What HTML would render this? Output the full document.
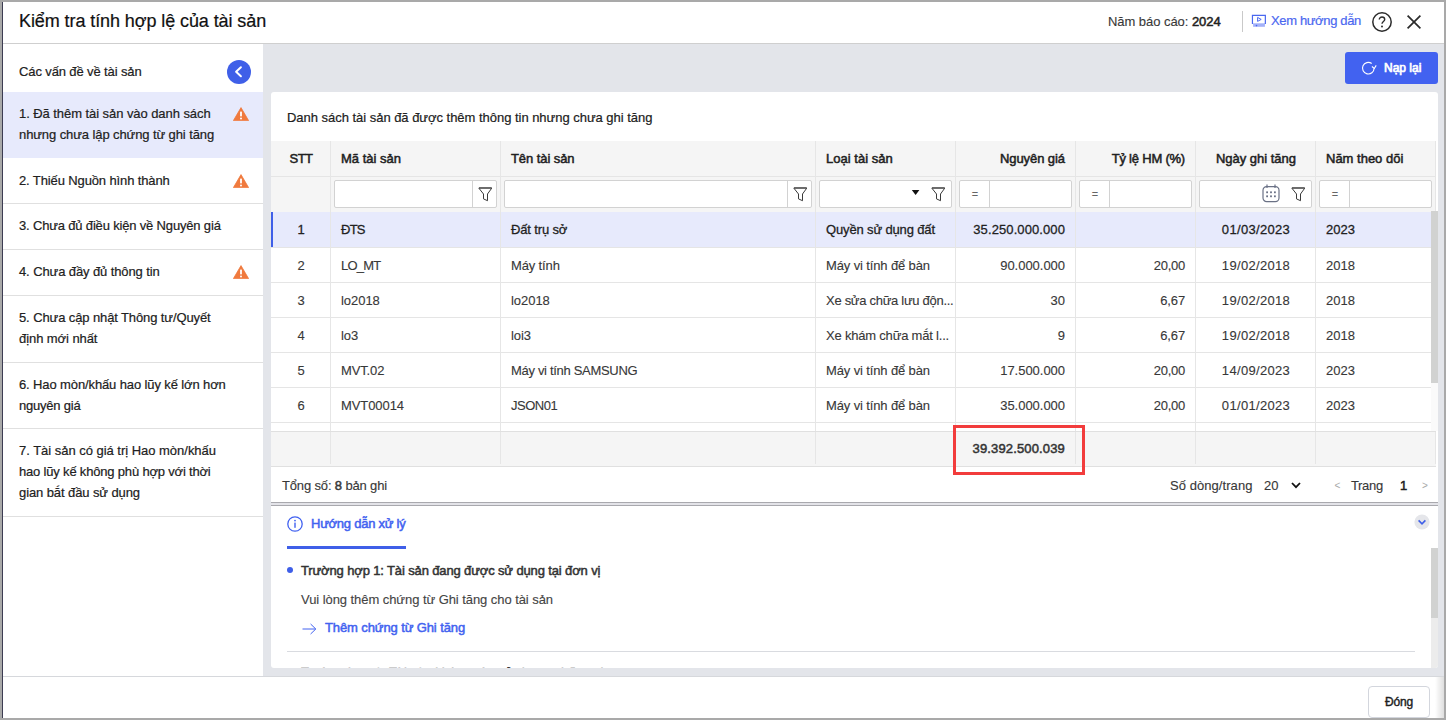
<!DOCTYPE html>
<html lang="vi">
<head>
<meta charset="utf-8">
<title>Kiểm tra tính hợp lệ của tài sản</title>
<style>
*{box-sizing:border-box;margin:0;padding:0}
html,body{width:1446px;height:720px;overflow:hidden}
body{background:#a9a9a9;font-family:"Liberation Sans",sans-serif;font-size:13px;color:#212121;position:relative}
.abs{position:absolute}
.t{position:absolute;white-space:nowrap;line-height:16px;height:16px;-webkit-text-stroke:0.2px currentColor}
#edge{left:2px;top:2px;width:1px;height:716px;background:#3c3c52}
#dlg{left:3px;top:2px;width:1441px;height:716px;background:#fff;overflow:hidden}
/* coordinates inside #dlg are page coords minus (3,2) -> use wrapper shift */
#pg{left:-3px;top:-2px;width:1446px;height:720px}
#hdrline{left:3px;top:43px;width:1441px;height:1px;background:#cfcfcf}
#title{left:19px;top:9px;font-size:18px;line-height:24px;height:24px;color:#111}
#mainbg{left:263px;top:44px;width:1181px;height:633px;background:#e3e5ea}
#ftline{left:3px;top:676px;width:1441px;height:1px;background:#d6d8dc}
#footer{left:3px;top:677px;width:1441px;height:41px;background:#fff}
#card{left:271px;top:92px;width:1167px;height:576px;background:#fff;border-radius:3px;overflow:hidden}
#cg{left:-271px;top:-92px;width:1446px;height:720px}
.sbi{position:absolute;left:3px;width:260px;border-bottom:1px solid #e0e0e0}
.sbt{position:absolute;left:19px;white-space:nowrap;line-height:21px;height:21px;color:#212121;-webkit-text-stroke:0.2px currentColor}
.warn{position:absolute;left:233px;width:16px;height:14px}
.vl{position:absolute;width:1px;background:#e6e6e6}
.hl{position:absolute;height:1px;background:#e5e5e5;left:271px;width:1165px}
.inp{position:absolute;top:180px;height:28px;border:1px solid #d2d2d2;border-radius:2px;background:#fff}
.sep{position:absolute;top:0;width:1px;height:26px;background:#d2d2d2}
.c{color:#383838;-webkit-text-stroke:0.12px currentColor}
.r1{-webkit-text-stroke:0.27px currentColor}
.b,b{font-weight:normal;-webkit-text-stroke:0.5px currentColor}
/*FIT*/
#title{letter-spacing:-0.089px}
#xhd{letter-spacing:-0.359px}
#sbh{letter-spacing:-0.116px}
#s1a{letter-spacing:-0.065px}
#s1b{letter-spacing:-0.096px}
#s2{letter-spacing:-0.121px}
#s3{letter-spacing:-0.169px}
#s4{letter-spacing:-0.106px}
#s5a{letter-spacing:-0.108px}
#s5b{letter-spacing:-0.074px}
#s6a{letter-spacing:-0.119px}
#s6b{letter-spacing:-0.212px}
#s7a{letter-spacing:-0.023px}
#s7b{letter-spacing:-0.182px}
#s7c{letter-spacing:-0.096px}
#ch{letter-spacing:-0.028px}
#hSTT{letter-spacing:-0.521px}
#hMa{letter-spacing:0.002px}
#hTen{letter-spacing:-0.075px}
#hLoai{letter-spacing:0.021px}
#hNG{letter-spacing:-0.078px}
#hTL{letter-spacing:-0.212px}
#hNgay{letter-spacing:-0.018px}
#hNam{letter-spacing:-0.002px}
#r1b{letter-spacing:-0.750px}
#r1c{letter-spacing:-0.141px}
#r1d{letter-spacing:-0.144px}
#r1e{letter-spacing:0.095px}
#r1g{letter-spacing:0.322px}
#r1h{letter-spacing:0.020px}
#r2b{letter-spacing:-0.769px}
#r2c{letter-spacing:-0.139px}
#r2d{letter-spacing:-0.130px}
#r2e{letter-spacing:-0.028px}
#r2f{letter-spacing:-0.249px}
#r2g{letter-spacing:0.322px}
#r2h{letter-spacing:0.020px}
#r3b{letter-spacing:-0.049px}
#r3c{letter-spacing:-0.049px}
#r3d{letter-spacing:-0.291px}
#r3f{letter-spacing:-0.153px}
#r3g{letter-spacing:0.322px}
#r3h{letter-spacing:0.020px}
#r4b{letter-spacing:-0.120px}
#r4c{letter-spacing:-0.062px}
#r4d{letter-spacing:-0.200px}
#r4f{letter-spacing:-0.153px}
#r4g{letter-spacing:0.322px}
#r4h{letter-spacing:0.020px}
#r5b{letter-spacing:-0.138px}
#r5c{letter-spacing:-0.313px}
#r5d{letter-spacing:-0.130px}
#r5e{letter-spacing:-0.028px}
#r5f{letter-spacing:-0.249px}
#r5g{letter-spacing:0.322px}
#r5h{letter-spacing:0.020px}
#r6b{letter-spacing:-0.074px}
#r6c{letter-spacing:-0.482px}
#r6d{letter-spacing:-0.130px}
#r6e{letter-spacing:-0.028px}
#r6f{letter-spacing:-0.249px}
#r6g{letter-spacing:0.322px}
#r6h{letter-spacing:0.020px}
#sum{letter-spacing:0.152px}
#tong{letter-spacing:-0.150px}
#sdt{letter-spacing:0.062px}
#trang{letter-spacing:-0.337px}
#hdxl{letter-spacing:-0.247px}
#th1{letter-spacing:-0.133px}
#vl{letter-spacing:-0.062px}
#them{letter-spacing:-0.110px}
#nap{letter-spacing:-0.008px}
#dong{letter-spacing:-0.147px}
#nbc{letter-spacing:-0.051px}
/*ENDFIT*/
</style>
</head>
<body>
<div id="edge" class="abs"></div>
<div id="dlg" class="abs"><div id="pg" class="abs">

<!-- header -->
<div id="title" class="t">Kiểm tra tính hợp lệ của tài sản</div>
<div class="t c" id="nbc" style="left:1108px;top:14px">Năm báo cáo: <b style="color:#212121">2024</b></div>
<div class="abs" style="left:1242px;top:11px;width:1px;height:21px;background:#c9c9c9"></div>
<svg class="abs" style="left:1251px;top:14px" width="16" height="14" viewBox="0 0 16 14"><rect x="2.1" y="9.3" width="11.8" height="3.5" fill="#a3b1f9"/><path d="M1.45 9.9 V1.45 H14.35 V9.9" fill="none" stroke="#4a67f0" stroke-width="1.2"/><path d="M6.6 3.4 L10.2 5.4 L6.6 7.4 Z" fill="none" stroke="#4a67f0" stroke-width="1" stroke-linejoin="round"/><circle cx="5.5" cy="11.6" r="0.8" fill="#4a67f0"/></svg>
<div class="t" id="xhd" style="left:1271px;top:13px;color:#4a67f0">Xem hướng dẫn</div>
<svg class="abs" style="left:1371px;top:11px" width="22" height="22" viewBox="0 0 22 22"><circle cx="11" cy="11" r="9.2" fill="none" stroke="#2b2b2b" stroke-width="1.5"/><path d="M8.3 8.6 C8.3 6.9 9.5 6 11 6 C12.6 6 13.7 7 13.7 8.4 C13.7 10.4 11 10.6 11 12.8" fill="none" stroke="#2b2b2b" stroke-width="1.4"/><circle cx="11" cy="15.6" r="1" fill="#2b2b2b"/></svg>
<svg class="abs" style="left:1406px;top:14px" width="16" height="16" viewBox="0 0 16 16"><path d="M1.6 1.6 L14.4 14.4 M14.4 1.6 L1.6 14.4" stroke="#2b2b2b" stroke-width="1.7" fill="none"/></svg>
<div id="hdrline" class="abs"></div>

<!-- main background -->
<div id="mainbg" class="abs"></div>


<!-- sidebar -->
<div class="sbt" id="sbh" style="top:61px">Các vấn đề về tài sản</div>
<svg class="abs" style="left:227px;top:60px" width="24" height="24" viewBox="0 0 24 24"><circle cx="12" cy="12" r="12" fill="#3f5fe8"/><path d="M13.9 7.3 L9.1 11.8 L13.9 16.3" fill="none" stroke="#fff" stroke-width="2" stroke-linecap="round" stroke-linejoin="round"/></svg>
<div class="sbi" style="top:92px;height:66px;background:#e7eafc;border-bottom:0"></div>
<div class="sbt" id="s1a" style="top:103px">1. Đã thêm tài sản vào danh sách</div>
<div class="sbt" id="s1b" style="top:124px">nhưng chưa lập chứng từ ghi tăng</div>
<svg class="warn" style="top:107px" viewBox="0 0 16 14"><path d="M8 0.6 L15.6 13.6 L0.4 13.6 Z" fill="#f07a3e" stroke="#f07a3e" stroke-width="0.8" stroke-linejoin="round"/><rect x="7.1" y="4.4" width="1.8" height="5" rx="0.6" fill="#fff"/><circle cx="8" cy="11.4" r="1" fill="#fff"/></svg>
<div class="sbi" style="top:158px;height:46px"></div>
<div class="sbt" id="s2" style="top:170px">2. Thiếu Nguồn hình thành</div>
<svg class="warn" style="top:174px" viewBox="0 0 16 14"><path d="M8 0.6 L15.6 13.6 L0.4 13.6 Z" fill="#f07a3e" stroke="#f07a3e" stroke-width="0.8" stroke-linejoin="round"/><rect x="7.1" y="4.4" width="1.8" height="5" rx="0.6" fill="#fff"/><circle cx="8" cy="11.4" r="1" fill="#fff"/></svg>
<div class="sbi" style="top:204px;height:46px"></div>
<div class="sbt" id="s3" style="top:215px">3. Chưa đủ điều kiện về Nguyên giá</div>
<div class="sbi" style="top:250px;height:46px"></div>
<div class="sbt" id="s4" style="top:261px">4. Chưa đầy đủ thông tin</div>
<svg class="warn" style="top:265px" viewBox="0 0 16 14"><path d="M8 0.6 L15.6 13.6 L0.4 13.6 Z" fill="#f07a3e" stroke="#f07a3e" stroke-width="0.8" stroke-linejoin="round"/><rect x="7.1" y="4.4" width="1.8" height="5" rx="0.6" fill="#fff"/><circle cx="8" cy="11.4" r="1" fill="#fff"/></svg>
<div class="sbi" style="top:296px;height:67px"></div>
<div class="sbt" id="s5a" style="top:307px">5. Chưa cập nhật Thông tư/Quyết</div>
<div class="sbt" id="s5b" style="top:328px">định mới nhất</div>
<div class="sbi" style="top:363px;height:66px"></div>
<div class="sbt" id="s6a" style="top:374px">6. Hao mòn/khấu hao lũy kế lớn hơn</div>
<div class="sbt" id="s6b" style="top:395px">nguyên giá</div>
<div class="sbi" style="top:429px;height:88px"></div>
<div class="sbt" id="s7a" style="top:440px">7. Tài sản có giá trị Hao mòn/khấu</div>
<div class="sbt" id="s7b" style="top:461px">hao lũy kế không phù hợp với thời</div>
<div class="sbt" id="s7c" style="top:482px">gian bắt đầu sử dụng</div>

<!-- footer -->
<div id="ftline" class="abs"></div>
<div id="footer" class="abs"></div>
<div class="abs" style="left:1435px;top:677px;width:9px;height:41px;background:linear-gradient(to right,rgba(0,0,0,0),rgba(0,0,0,0.13))"></div>

<!-- card -->
<div id="card" class="abs"><div id="cg" class="abs">
<div class="t" id="ch" style="left:287px;top:110px;color:#212121">Danh sách tài sản đã được thêm thông tin nhưng chưa ghi tăng</div>
<div class="abs" style="left:271px;top:141px;width:1165px;height:71px;background:#f5f5f5"></div>
<div class="hl" style="top:176px"></div>
<div class="abs" style="left:271px;top:212px;width:1165px;height:36px;background:#e7eafc"></div>
<div class="abs" style="left:271px;top:212px;width:2px;height:36px;background:#3f5fe8"></div>
<div class="hl" style="top:247px"></div>
<div class="hl" style="top:282px"></div>
<div class="hl" style="top:317px"></div>
<div class="hl" style="top:352px"></div>
<div class="hl" style="top:387px"></div>
<div class="hl" style="top:422px"></div>
<div class="abs" style="left:271px;top:431px;width:1165px;height:36px;background:#f5f5f5;border-top:1px solid #e0e0e0;border-bottom:1px solid #e0e0e0"></div>
<div class="vl" style="left:330px;top:141px;height:290px"></div>
<div class="vl" style="left:330px;top:432px;height:32px"></div>
<div class="vl" style="left:500px;top:141px;height:290px"></div>
<div class="vl" style="left:500px;top:432px;height:32px"></div>
<div class="vl" style="left:815px;top:141px;height:290px"></div>
<div class="vl" style="left:815px;top:432px;height:32px"></div>
<div class="vl" style="left:955px;top:141px;height:290px"></div>
<div class="vl" style="left:955px;top:432px;height:32px"></div>
<div class="vl" style="left:1075px;top:141px;height:290px"></div>
<div class="vl" style="left:1075px;top:432px;height:32px"></div>
<div class="vl" style="left:1195px;top:141px;height:290px"></div>
<div class="vl" style="left:1195px;top:432px;height:32px"></div>
<div class="vl" style="left:1315px;top:141px;height:290px"></div>
<div class="vl" style="left:1315px;top:432px;height:32px"></div>
<div class="vl" style="left:1435px;top:141px;height:290px"></div>
<div class="vl" style="left:1435px;top:432px;height:32px"></div>
<div class="t b" id="hSTT" style="left:201px;width:200px;text-align:center;top:151px">STT</div>
<div class="t b" id="hMa" style="left:341px;top:151px">Mã tài sản</div>
<div class="t b" id="hTen" style="left:511px;top:151px">Tên tài sản</div>
<div class="t b" id="hLoai" style="left:826px;top:151px">Loại tài sản</div>
<div class="t b" id="hNG" style="right:381px;top:151px">Nguyên giá</div>
<div class="t b" id="hTL" style="right:261px;top:151px">Tỷ lệ HM (%)</div>
<div class="t b" id="hNgay" style="left:1156px;width:200px;text-align:center;top:151px">Ngày ghi tăng</div>
<div class="t b" id="hNam" style="left:1326px;top:151px">Năm theo dõi</div>
<div class="inp" style="left:334px;width:163px"><div class="sep" style="left:137px"></div></div><svg class="abs" style="left:478px;top:187px" width="15" height="15" viewBox="0 0 15 15"><path d="M0.8 1.1 H13.8 L9.5 7 V13.7 L5.5 11.9 V7 Z" fill="none" stroke="#3a3a3a" stroke-width="1" stroke-linejoin="round"/><path d="M1 0.9 H13.6" stroke="#555" stroke-width="1.1"/></svg>
<div class="inp" style="left:504px;width:308px"><div class="sep" style="left:282px"></div></div><svg class="abs" style="left:793px;top:187px" width="15" height="15" viewBox="0 0 15 15"><path d="M0.8 1.1 H13.8 L9.5 7 V13.7 L5.5 11.9 V7 Z" fill="none" stroke="#3a3a3a" stroke-width="1" stroke-linejoin="round"/><path d="M1 0.9 H13.6" stroke="#555" stroke-width="1.1"/></svg>
<div class="inp" style="left:819px;width:133px"></div><svg class="abs" style="left:931px;top:187px" width="15" height="15" viewBox="0 0 15 15"><path d="M0.8 1.1 H13.8 L9.5 7 V13.7 L5.5 11.9 V7 Z" fill="none" stroke="#3a3a3a" stroke-width="1" stroke-linejoin="round"/><path d="M1 0.9 H13.6" stroke="#555" stroke-width="1.1"/></svg><svg class="abs" style="left:911px;top:189px" width="9" height="7" viewBox="0 0 9 7"><path d="M0.8 1.1 H8.4 L4.6 5.9 Z" fill="#111"/></svg>
<div class="inp" style="left:959px;width:113px"><div class="sep" style="left:29px"></div><div class="t" style="left:0;width:30px;text-align:center;top:5px;color:#666;font-size:11px;-webkit-text-stroke:0">=</div></div>
<div class="inp" style="left:1079px;width:113px"><div class="sep" style="left:29px"></div><div class="t" style="left:0;width:30px;text-align:center;top:5px;color:#666;font-size:11px;-webkit-text-stroke:0">=</div></div>
<div class="inp" style="left:1319px;width:113px"><div class="sep" style="left:29px"></div><div class="t" style="left:0;width:30px;text-align:center;top:5px;color:#666;font-size:11px;-webkit-text-stroke:0">=</div></div>
<div class="inp" style="left:1199px;width:113px"></div><svg class="abs" style="left:1291px;top:187px" width="15" height="15" viewBox="0 0 15 15"><path d="M0.8 1.1 H13.8 L9.5 7 V13.7 L5.5 11.9 V7 Z" fill="none" stroke="#3a3a3a" stroke-width="1" stroke-linejoin="round"/><path d="M1 0.9 H13.6" stroke="#555" stroke-width="1.1"/></svg>
<svg class="abs" style="left:1262px;top:184px" width="18" height="19" viewBox="0 0 18 19"><rect x="1" y="2.6" width="16" height="15" rx="3.6" fill="none" stroke="#6a7185" stroke-width="1.2"/><path d="M5 0.6 V4 M13 0.6 V4" stroke="#6a7185" stroke-width="1.2"/><g fill="#6a7185"><rect x="4.2" y="7.4" width="1.8" height="1.8"/><rect x="8.1" y="7.4" width="1.8" height="1.8"/><rect x="12" y="7.4" width="1.8" height="1.8"/><rect x="4.2" y="11.4" width="1.8" height="1.8"/><rect x="8.1" y="11.4" width="1.8" height="1.8"/><rect x="12" y="11.4" width="1.8" height="1.8"/></g></svg>
<div class="t r1" id="r1a" style="left:201px;width:200px;text-align:center;top:222px">1</div>
<div class="t r1" id="r1b" style="left:341px;top:222px">ĐTS</div>
<div class="t r1" id="r1c" style="left:511px;top:222px">Đất trụ sở</div>
<div class="t r1" id="r1d" style="left:826px;top:222px">Quyền sử dụng đất</div>
<div class="t r1" id="r1e" style="right:381px;top:222px">35.250.000.000</div>
<div class="t r1" id="r1g" style="left:1156px;width:200px;text-align:center;top:222px">01/03/2023</div>
<div class="t r1" id="r1h" style="left:1326px;top:222px">2023</div>
<div class="t c" id="r2a" style="left:201px;width:200px;text-align:center;top:258px">2</div>
<div class="t c" id="r2b" style="left:341px;top:258px">LO_MT</div>
<div class="t c" id="r2c" style="left:511px;top:258px">Máy tính</div>
<div class="t c" id="r2d" style="left:826px;top:258px">Máy vi tính để bàn</div>
<div class="t c" id="r2e" style="right:381px;top:258px">90.000.000</div>
<div class="t c" id="r2f" style="right:261px;top:258px">20,00</div>
<div class="t c" id="r2g" style="left:1156px;width:200px;text-align:center;top:258px">19/02/2018</div>
<div class="t c" id="r2h" style="left:1326px;top:258px">2018</div>
<div class="t c" id="r3a" style="left:201px;width:200px;text-align:center;top:293px">3</div>
<div class="t c" id="r3b" style="left:341px;top:293px">lo2018</div>
<div class="t c" id="r3c" style="left:511px;top:293px">lo2018</div>
<div class="t c" id="r3d" style="left:826px;top:293px">Xe sửa chữa lưu độn...</div>
<div class="t c" id="r3e" style="right:381px;top:293px">30</div>
<div class="t c" id="r3f" style="right:261px;top:293px">6,67</div>
<div class="t c" id="r3g" style="left:1156px;width:200px;text-align:center;top:293px">19/02/2018</div>
<div class="t c" id="r3h" style="left:1326px;top:293px">2018</div>
<div class="t c" id="r4a" style="left:201px;width:200px;text-align:center;top:328px">4</div>
<div class="t c" id="r4b" style="left:341px;top:328px">lo3</div>
<div class="t c" id="r4c" style="left:511px;top:328px">loi3</div>
<div class="t c" id="r4d" style="left:826px;top:328px">Xe khám chữa mắt l...</div>
<div class="t c" id="r4e" style="right:381px;top:328px">9</div>
<div class="t c" id="r4f" style="right:261px;top:328px">6,67</div>
<div class="t c" id="r4g" style="left:1156px;width:200px;text-align:center;top:328px">19/02/2018</div>
<div class="t c" id="r4h" style="left:1326px;top:328px">2018</div>
<div class="t c" id="r5a" style="left:201px;width:200px;text-align:center;top:363px">5</div>
<div class="t c" id="r5b" style="left:341px;top:363px">MVT.02</div>
<div class="t c" id="r5c" style="left:511px;top:363px">Máy vi tính SAMSUNG</div>
<div class="t c" id="r5d" style="left:826px;top:363px">Máy vi tính để bàn</div>
<div class="t c" id="r5e" style="right:381px;top:363px">17.500.000</div>
<div class="t c" id="r5f" style="right:261px;top:363px">20,00</div>
<div class="t c" id="r5g" style="left:1156px;width:200px;text-align:center;top:363px">14/09/2023</div>
<div class="t c" id="r5h" style="left:1326px;top:363px">2023</div>
<div class="t c" id="r6a" style="left:201px;width:200px;text-align:center;top:398px">6</div>
<div class="t c" id="r6b" style="left:341px;top:398px">MVT00014</div>
<div class="t c" id="r6c" style="left:511px;top:398px">JSON01</div>
<div class="t c" id="r6d" style="left:826px;top:398px">Máy vi tính để bàn</div>
<div class="t c" id="r6e" style="right:381px;top:398px">35.000.000</div>
<div class="t c" id="r6f" style="right:261px;top:398px">20,00</div>
<div class="t c" id="r6g" style="left:1156px;width:200px;text-align:center;top:398px">01/01/2023</div>
<div class="t c" id="r6h" style="left:1326px;top:398px">2023</div>
<div class="t b" id="sum" style="color:#333;right:381px;top:441px">39.392.500.039</div>
<div class="abs" style="left:1431px;top:211px;width:7px;height:220px;background:#fafafa"></div>
<div class="abs" style="left:1431px;top:211px;width:7px;height:172px;background:#d1d2d1"></div>
<div class="abs" style="left:953px;top:425px;width:132px;height:50px;border:3px solid #f23c3c"></div>
<div class="t c" id="tong" style="margin-top:1px;left:282px;top:477px">Tổng số: <b>8</b> bản ghi</div>
<div class="t c" id="sdt" style="margin-top:1px;left:1170px;top:477px">Số dòng/trang</div>
<div class="t c" id="n20" style="margin-top:1px;left:1264px;top:477px">20</div>
<svg class="abs" style="left:1291px;top:482px" width="10" height="7" viewBox="0 0 10 7"><path d="M1 1 L5 5.2 L9 1" fill="none" stroke="#111" stroke-width="1.8"/></svg>
<div class="t" id="plt" style="left:1334.5px;top:478px;color:#a8a8a8;font-size:10px;-webkit-text-stroke:0">&lt;</div>
<div class="t c" id="trang" style="margin-top:1px;left:1351px;top:477px">Trang</div>
<div class="t b" id="p1" style="margin-top:1px;left:1400px;top:477px;color:#212121">1</div>
<div class="t" id="pgt" style="left:1422px;top:478px;color:#a8a8a8;font-size:10px;-webkit-text-stroke:0">&gt;</div>
<div class="abs" style="left:271px;top:502px;width:1167px;height:4px;background:#e3e3e8;border-top:1px solid #a9a9ae;border-bottom:1px solid #a9a9ae"></div>

<svg class="abs" style="left:287px;top:516px" width="16" height="16" viewBox="0 0 16 16"><circle cx="8" cy="8" r="7.2" fill="none" stroke="#4262f0" stroke-width="1.3"/><rect x="7.3" y="6.6" width="1.4" height="5.2" fill="#4262f0"/><circle cx="8" cy="4.6" r="0.9" fill="#4262f0"/></svg>
<div class="t b" id="hdxl" style="left:311px;top:516px;color:#4262f0">Hướng dẫn xử lý</div>
<div class="abs" style="left:287px;top:546px;width:119px;height:3px;background:#3f5fe8"></div>
<div class="abs" style="left:287px;top:567px;width:6px;height:6px;border-radius:3px;background:#3f5fe8"></div>
<div class="t b" id="th1" style="left:301px;top:563px;color:#333">Trường hợp 1: Tài sản đang được sử dụng tại đơn vị</div>
<div class="t c" id="vl" style="left:301px;top:592px;color:#444">Vui lòng thêm chứng từ Ghi tăng cho tài sản</div>
<svg class="abs" style="left:302px;top:623px" width="15" height="12" viewBox="0 0 15 12"><path d="M0.5 6 H13.6 M8.6 1 L13.8 6 L8.6 11" fill="none" stroke="#4262f0" stroke-width="1"/></svg>
<div class="t b" id="them" style="left:325px;top:620px;color:#4262f0">Thêm chứng từ Ghi tăng</div>
<div class="abs" style="left:287px;top:651px;width:1128px;height:1px;background:#d9dbe0"></div>
<div class="abs" style="left:287px;top:677px;width:6px;height:6px;border-radius:3px;background:#3f5fe8"></div>
<div class="t b" id="th2" style="left:301px;top:665px;color:#333">Trường hợp 2: Tài sản không còn sử dụng tại đơn vị</div>
<svg class="abs" style="left:1414px;top:514px" width="16" height="16" viewBox="0 0 16 16"><circle cx="8" cy="8" r="7.6" fill="#e5e6ea"/><path d="M4.6 6.4 L8 9.8 L11.4 6.4" fill="none" stroke="#3f5fe8" stroke-width="1.6"/></svg>
<div class="abs" style="left:1431px;top:548px;width:7px;height:120px;background:#ececec"></div>
<div class="abs" style="left:1431px;top:548px;width:7px;height:70px;background:#d1d2d1"></div>
</div></div>

<div class="abs" style="left:1345px;top:52px;width:93px;height:32px;background:#4262f0;border-radius:3px"></div>
<svg class="abs" style="left:1361px;top:61px" width="17" height="15" viewBox="0 0 17 15"><path d="M10.7 2.5 A5.8 5.8 0 1 0 13.1 7.3" fill="none" stroke="#fff" stroke-width="1.1"/><path d="M10.9 5.5 L13.3 7.5 L15.2 4.4" fill="none" stroke="#fff" stroke-width="1.1"/></svg>
<div class="t b" id="nap" style="left:1384px;top:60px;color:#fff;font-size:12px;-webkit-text-stroke:0.7px #fff">Nạp lại</div>
<div class="abs" style="left:1368px;top:686px;width:62px;height:32px;border:1px solid #d3d6dd;border-radius:4px;background:#fff"></div>
<div class="t b" id="dong" style="left:1385px;top:694px;color:#212121;font-size:12px;-webkit-text-stroke:0.4px currentColor">Đóng</div>
</div></div>
</body>
</html>
